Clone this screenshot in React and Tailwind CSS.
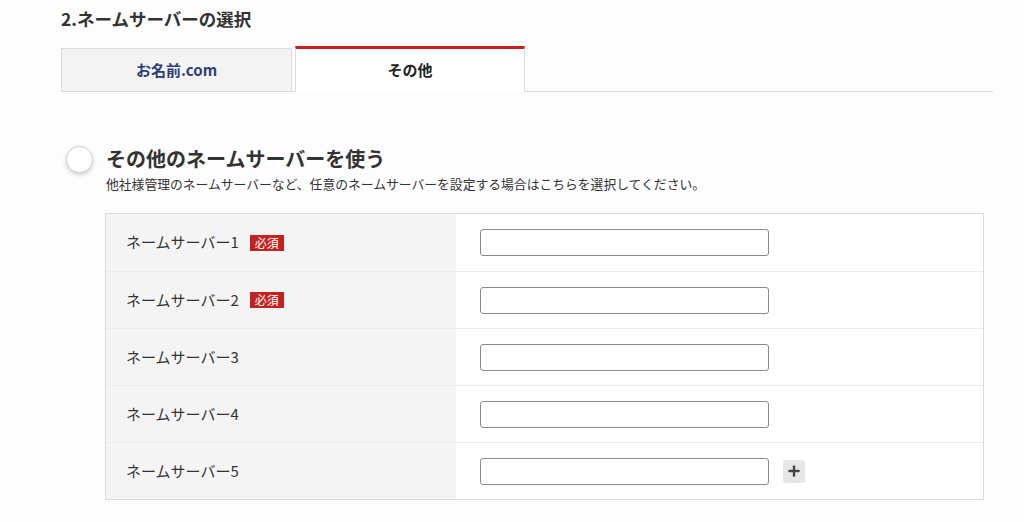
import { Plus } from 'lucide-react';

const rows = [
  { label: 'ネームサーバー1', required: true },
  { label: 'ネームサーバー2', required: true },
  { label: 'ネームサーバー3' },
  { label: 'ネームサーバー4' },
  { label: 'ネームサーバー5', add: true },
];

const App = () => {
  return (
    <div
      className="min-h-[522px] bg-[#fdfdfd] text-[#333] pl-[61px] pr-[31px] pt-[6px]"
      style={{ fontFamily: '"Noto Sans CJK JP", "Noto Sans", sans-serif' }}
    >
      <h2 className="text-[17.5px] font-bold leading-[26px]">2.ネームサーバーの選択</h2>

      {/* tabs */}
      <div className="mt-[14px] flex items-end border-b border-[#dcdcdc]">
        <div className="w-[231px] h-[44px] -mb-px flex items-center justify-center bg-[#f3f3f3] border border-[#dcdcdc] text-[15px] font-bold text-[#2c4079]">
          お名前.com
        </div>
        <div className="ml-[3px] w-[230px] h-[46px] -mb-px flex items-center justify-center bg-white border-x border-[#dcdcdc] border-t-[3px] border-t-[#c8201f] text-[15px] font-bold text-[#222]">
          その他
        </div>
      </div>

      {/* option */}
      <div className="mt-[53px] flex items-start">
        <div className="ml-[5px] mt-[1px] w-[27px] h-[27px] rounded-full bg-white border border-[#cfcfcf] shadow-[0_2px_4px_rgba(0,0,0,0.18)] shrink-0" />
        <div className="ml-[13px]">
          <div className="text-[20px] font-bold leading-[28px]">その他のネームサーバーを使う</div>
          <div className="mt-[2px] text-[12.8px] leading-[18px]">
            他社様管理のネームサーバーなど、任意のネームサーバーを設定する場合はこちらを選択してください。
          </div>
        </div>
      </div>

      {/* table */}
      <div className="mt-[20px] ml-[44px] w-[879px] border border-[#dcdcdc] bg-white">
        {rows.map((row, i) => (
          <div
            key={i}
            className={`flex h-[57px] ${i > 0 ? 'border-t border-dotted border-[#d8d8d8]' : ''}`}
          >
            <div className="w-[350px] bg-[#f4f4f4] flex items-center pl-[20px] text-[15px]">
              <span>{row.label}</span>
              {row.required && (
                <span className="ml-[11px] w-[34px] h-[16px] flex items-center justify-center bg-[#c2231f] text-white text-[12px] leading-none">
                  必須
                </span>
              )}
            </div>
            <div className="flex-1 flex items-center pl-[24px]">
              <input
                type="text"
                className="w-[289px] h-[27px] border border-[#8a8a8a] rounded-[3px] bg-white outline-none"
              />
              {row.add && (
                <button className="ml-[14px] w-[22px] h-[23px] rounded-[3px] bg-[#e6e6e6] flex items-center justify-center">
                  <Plus size={16} strokeWidth={3.5} className="text-[#444]" />
                </button>
              )}
            </div>
          </div>
        ))}
      </div>
    </div>
  );
};

export default App;
